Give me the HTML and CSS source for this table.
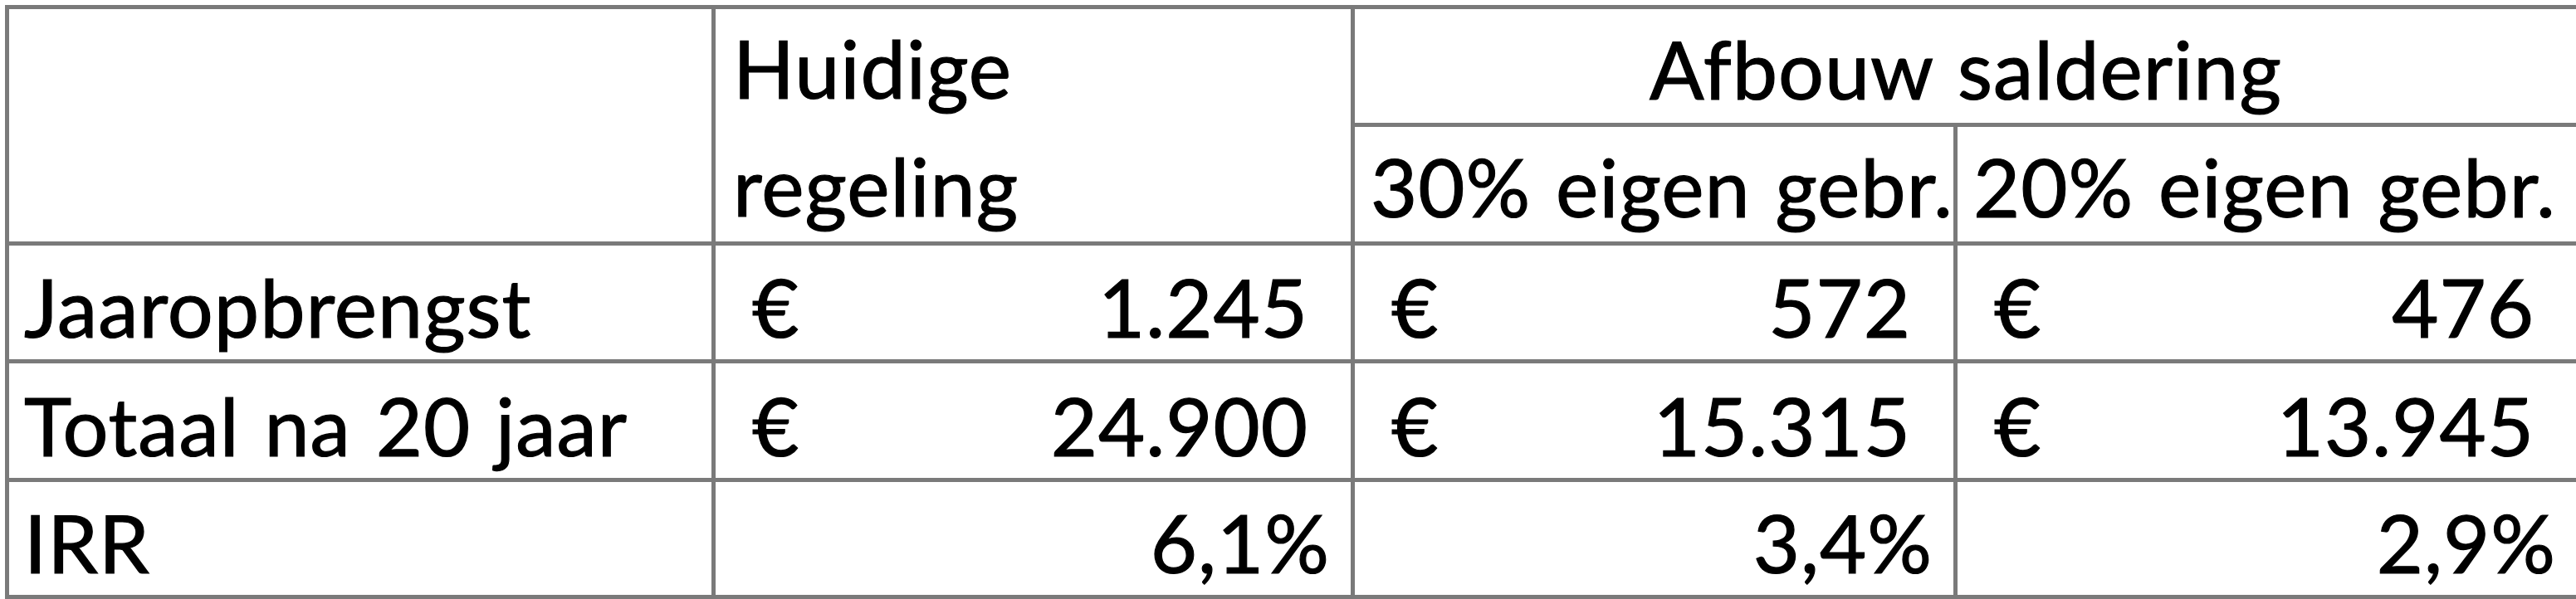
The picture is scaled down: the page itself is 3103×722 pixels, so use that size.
FILE: index.html
```html
<!DOCTYPE html>
<html lang="nl">
<head>
<meta charset="utf-8">
<title>Saldering</title>
<link rel="stylesheet" href="styles.css">
</head>
<body>
<div class="sheet">
  <div class="cell corner"></div>
  <div class="cell head-current">Huidige<br>regeling</div>
  <div class="cell head-group">Afbouw saldering</div>
  <div class="cell head-sub">30% eigen gebr.</div>
  <div class="cell head-sub">20% eigen gebr.</div>

  <div class="cell label">Jaaropbrengst</div>
  <div class="cell money"><span class="cur">€</span><span>1.245</span></div>
  <div class="cell money"><span class="cur">€</span><span>572</span></div>
  <div class="cell money"><span class="cur">€</span><span>476</span></div>

  <div class="cell label">Totaal na 20 jaar</div>
  <div class="cell money"><span class="cur">€</span><span>24.900</span></div>
  <div class="cell money"><span class="cur">€</span><span>15.315</span></div>
  <div class="cell money"><span class="cur">€</span><span>13.945</span></div>

  <div class="cell label">IRR</div>
  <div class="cell pct">6,1%</div>
  <div class="cell pct">3,4%</div>
  <div class="cell pct">2,9%</div>
</div>
</body>
</html>
```

FILE: styles.css
```css
html, body {
  margin: 0;
  padding: 0;
  background: #ffffff;
  overflow: hidden;
}

body {
  width: 3103px;
  height: 722px;
}

.sheet {
  margin: 6px 0 0 6px;
  width: 3108px;
  box-sizing: border-box;
  display: grid;
  grid-template-columns: 846px 765px 721px 746px;
  grid-template-rows: 137px 138px 137px 138px 136px;
  gap: 5px;
  padding: 5px;
  background: #7a7a7a;
  font-family: Lato, "Liberation Sans", sans-serif;
  font-size: 97px;
  line-height: 114px;
  letter-spacing: 1px;
  word-spacing: 4px;
  color: #000000;
  -webkit-text-stroke: 1.2px #000000;
}

.cell {
  background: #ffffff;
  display: flex;
  align-items: flex-end;
  padding: 0 20px 6px 20px;
  white-space: nowrap;
  overflow: hidden;
}

.corner {
  grid-row: 1 / span 2;
  grid-column: 1;
}

.head-current {
  grid-row: 1 / span 2;
  grid-column: 2;
  display: block;
  line-height: 142px;
  padding: 0 20px 0 21px;
}

.head-group {
  grid-row: 1;
  grid-column: 3 / span 2;
  justify-content: center;
  padding-bottom: 8px;
}

.head-sub {
  padding: 0 0 9px 19px;
  overflow: visible;
}

.label {
  padding-left: 18px;
}

.money {
  justify-content: space-between;
  padding-left: 44px;
  padding-right: 51px;
}

.pct {
  justify-content: flex-end;
  padding-right: 25px;
}
```
